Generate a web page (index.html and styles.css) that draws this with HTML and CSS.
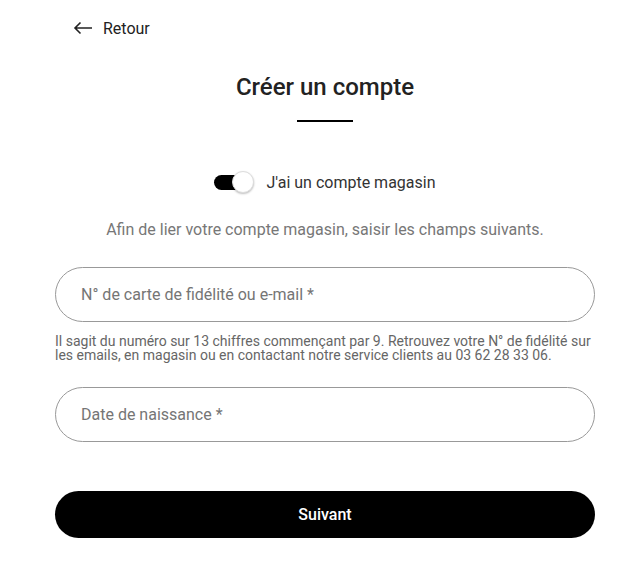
FILE: index.html
```html
<!DOCTYPE html>
<html lang='fr'>
    <head>
        <meta charset='UTF-8'>
        <title>Créer un compte</title>
        <link rel="stylesheet" href="styles.css">
    </head>
    <body>
        <div class='page'>
            <a class='back' href='#'>
                <svg width='20' height='14' viewBox='0 0 20 14'>
                    <path d='M19 7H2M7.5 1.5L2 7l5.5 5.5' fill='none' stroke='#222' stroke-width='1.6'/>
                </svg>
                <span>Retour</span>
            </a>

            <h1>Créer un compte</h1>
            <div class='rule'></div>

            <label class='switch'>
                <span class='toggle'><span class='knob'></span></span>
                <span>J'ai un compte magasin</span>
            </label>

            <p class='intro'>Afin de lier votre compte magasin, saisir les champs suivants.</p>

            <input class='field first' type='text' placeholder='N° de carte de fidélité ou e-mail *'>
            <p class='help'>Il sagit du numéro sur 13 chiffres commençant par 9. Retrouvez votre N° de fidélité sur
                les emails, en magasin ou en contactant notre service clients au 03 62 28 33 06.</p>

            <input class='field second' type='text' placeholder='Date de naissance *'>

            <button class='next'>Suivant</button>
        </div>
    </body>
</html>
```

FILE: styles.css
```css
body {
    margin: 0;
    background: #fff;
    font-family: Roboto, "Liberation Sans", sans-serif;
    color: #222;
}
.page {
    width: 540px;
    margin-left: 55px;
}
.back {
    display: flex;
    align-items: center;
    gap: 10px;
    height: 20px;
    margin: 18px 0 0 18px;
    color: #222;
    text-decoration: none;
    font-size: 16px;
}
h1 {
    margin: 34px 0 0;
    font-size: 24px;
    font-weight: 500;
    line-height: 30px;
    text-align: center;
    color: #222;
}
.rule {
    width: 56px;
    height: 2px;
    margin: 18px auto 0;
    background: #000;
}
.switch {
    display: flex;
    justify-content: center;
    align-items: center;
    gap: 12px;
    height: 24px;
    margin-top: 48px;
    font-size: 16px;
    color: #333;
}
.toggle {
    position: relative;
    width: 40px;
    height: 24px;
}
.toggle::before {
    content: '';
    position: absolute;
    left: 0;
    top: 5px;
    width: 34px;
    height: 15px;
    border-radius: 8px;
    background: #000;
}
.knob {
    position: absolute;
    right: 0;
    top: 1px;
    width: 20px;
    height: 20px;
    border-radius: 50%;
    background: #fff;
    border: 1px solid #ddd;
    box-shadow: 0 1px 2px rgba(0, 0, 0, 0.25);
}
.intro {
    margin: 26px 0 0;
    font-size: 16px;
    line-height: 20px;
    text-align: center;
    color: #777;
}
.field {
    display: block;
    box-sizing: border-box;
    width: 100%;
    height: 55px;
    padding: 0 25px;
    border: 1px solid #999;
    border-radius: 28px;
    font-family: inherit;
    font-size: 16px;
    color: #222;
    outline: none;
}
.field::placeholder {
    color: #757575;
}
.first {
    margin-top: 27px;
}
.second {
    margin-top: 25px;
}
.help {
    margin: 12px 0 0;
    font-size: 14px;
    line-height: 14px;
    color: #666;
}
.next {
    display: block;
    width: 100%;
    height: 47px;
    margin-top: 49px;
    border: none;
    border-radius: 24px;
    background: #000;
    color: #fff;
    font-family: inherit;
    font-size: 16px;
    font-weight: 500;
}
```
